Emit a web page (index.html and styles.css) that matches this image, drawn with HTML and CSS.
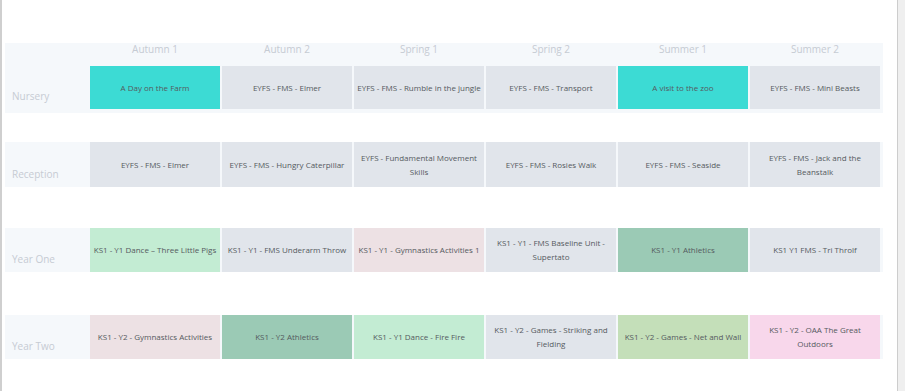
FILE: index.html
```html
<!DOCTYPE html>
<html>
<head>
<meta charset="utf-8">
<link rel="stylesheet" href="styles.css">
</head>
<body>
<div class="page">
  <main class="content">
    <section class="block block-nursery">
      <div class="grid head">
        <div class="label"></div>
        <div class="term">Autumn 1</div>
        <div class="term">Autumn 2</div>
        <div class="term">Spring 1</div>
        <div class="term">Spring 2</div>
        <div class="term">Summer 1</div>
        <div class="term">Summer 2</div>
      </div>
      <div class="grid row r-43">
        <div class="label">Nursery</div>
        <div class="cell teal">A Day on the Farm</div>
        <div class="cell gray">EYFS - FMS - Elmer</div>
        <div class="cell gray">EYFS - FMS - Rumble in the jungle</div>
        <div class="cell gray">EYFS - FMS - Transport</div>
        <div class="cell teal">A visit to the zoo</div>
        <div class="cell gray">EYFS - FMS - Mini Beasts</div>
      </div>
    </section>

    <section class="block block-reception">
      <div class="grid row r-45">
        <div class="label">Reception</div>
        <div class="cell gray">EYFS - FMS - Elmer</div>
        <div class="cell gray">EYFS - FMS - Hungry Caterpillar</div>
        <div class="cell gray">EYFS - Fundamental Movement Skills</div>
        <div class="cell gray">EYFS - FMS - Rosies Walk</div>
        <div class="cell gray">EYFS - FMS - Seaside</div>
        <div class="cell gray">EYFS - FMS - Jack and the Beanstalk</div>
      </div>
    </section>

    <section class="block block-y1">
      <div class="grid row r-44">
        <div class="label">Year One</div>
        <div class="cell mint">KS1 - Y1 Dance – Three Little Pigs</div>
        <div class="cell gray">KS1 - Y1 - FMS Underarm Throw</div>
        <div class="cell rose">KS1 - Y1 - Gymnastics Activities 1</div>
        <div class="cell gray">KS1 - Y1 - FMS Baseline Unit - Supertato</div>
        <div class="cell sage">KS1 - Y1 Athletics</div>
        <div class="cell gray">KS1 Y1 FMS - Tri Throlf</div>
      </div>
    </section>

    <section class="block block-y2">
      <div class="grid row r-44">
        <div class="label">Year Two</div>
        <div class="cell rose">KS1 - Y2 - Gymnastics Activities</div>
        <div class="cell sage">KS1 - Y2 Athletics</div>
        <div class="cell mint">KS1 - Y1 Dance - Fire Fire</div>
        <div class="cell gray">KS1 - Y2 - Games - Striking and Fielding</div>
        <div class="cell lime">KS1 - Y2 - Games - Net and Wall</div>
        <div class="cell pink">KS1 - Y2 - OAA The Great Outdoors</div>
      </div>
    </section>
  </main>
  <div class="scrollbar"></div>
</div>
</body>
</html>
```

FILE: styles.css
```css
* { box-sizing: border-box; }
html, body { margin: 0; padding: 0; background: #ffffff; }
body {
  font-family: "Open Sans", "Noto Sans", sans-serif;
  width: 905px;
  height: 391px;
  overflow: hidden;
}
.page {
  display: flex;
  height: 391px;
}
.content {
  width: 897px;
  height: 391px;
  border-left: 2px solid #cfcfcf;
  padding: 43px 0 0 3px;
}
.scrollbar {
  width: 8px;
  height: 391px;
  background: #efefef;
  border-left: 1px solid #cdcdcd;
}
.block {
  width: 878px;
  background: #f5f8fb;
}
.block-nursery { padding-bottom: 4px; }
.block-reception { margin-top: 29px; }
.block-y1 { margin-top: 41px; }
.block-y2 { margin-top: 43px; }

.grid {
  display: grid;
  grid-template-columns: 83px repeat(6, 130px);
  column-gap: 2px;
}
.head {
  height: 23px;
  padding-bottom: 2px;
}
.term {
  text-align: center;
  font-size: 10px;
  line-height: 12px;
  color: #c6cbd3;
}
.r-43 { height: 43px; }
.r-44 { height: 44px; }
.r-45 { height: 45px; }
.label {
  display: flex;
  align-items: flex-end;
  padding: 0 0 6px 7px;
  font-size: 10px;
  line-height: 14px;
  color: #c6cbd3;
}
.cell {
  display: flex;
  align-items: center;
  justify-content: center;
  text-align: center;
  padding: 0 1px;
  font-size: 8px;
  line-height: 14px;
  color: #555a60;
}
.teal { background: #3cdbd4; }
.gray { background: #e1e5eb; }
.mint { background: #c3ecd3; }
.rose { background: #ede1e4; }
.sage { background: #9bcab5; }
.lime { background: #c4dfb9; }
.pink { background: #f8d7eb; }
```
